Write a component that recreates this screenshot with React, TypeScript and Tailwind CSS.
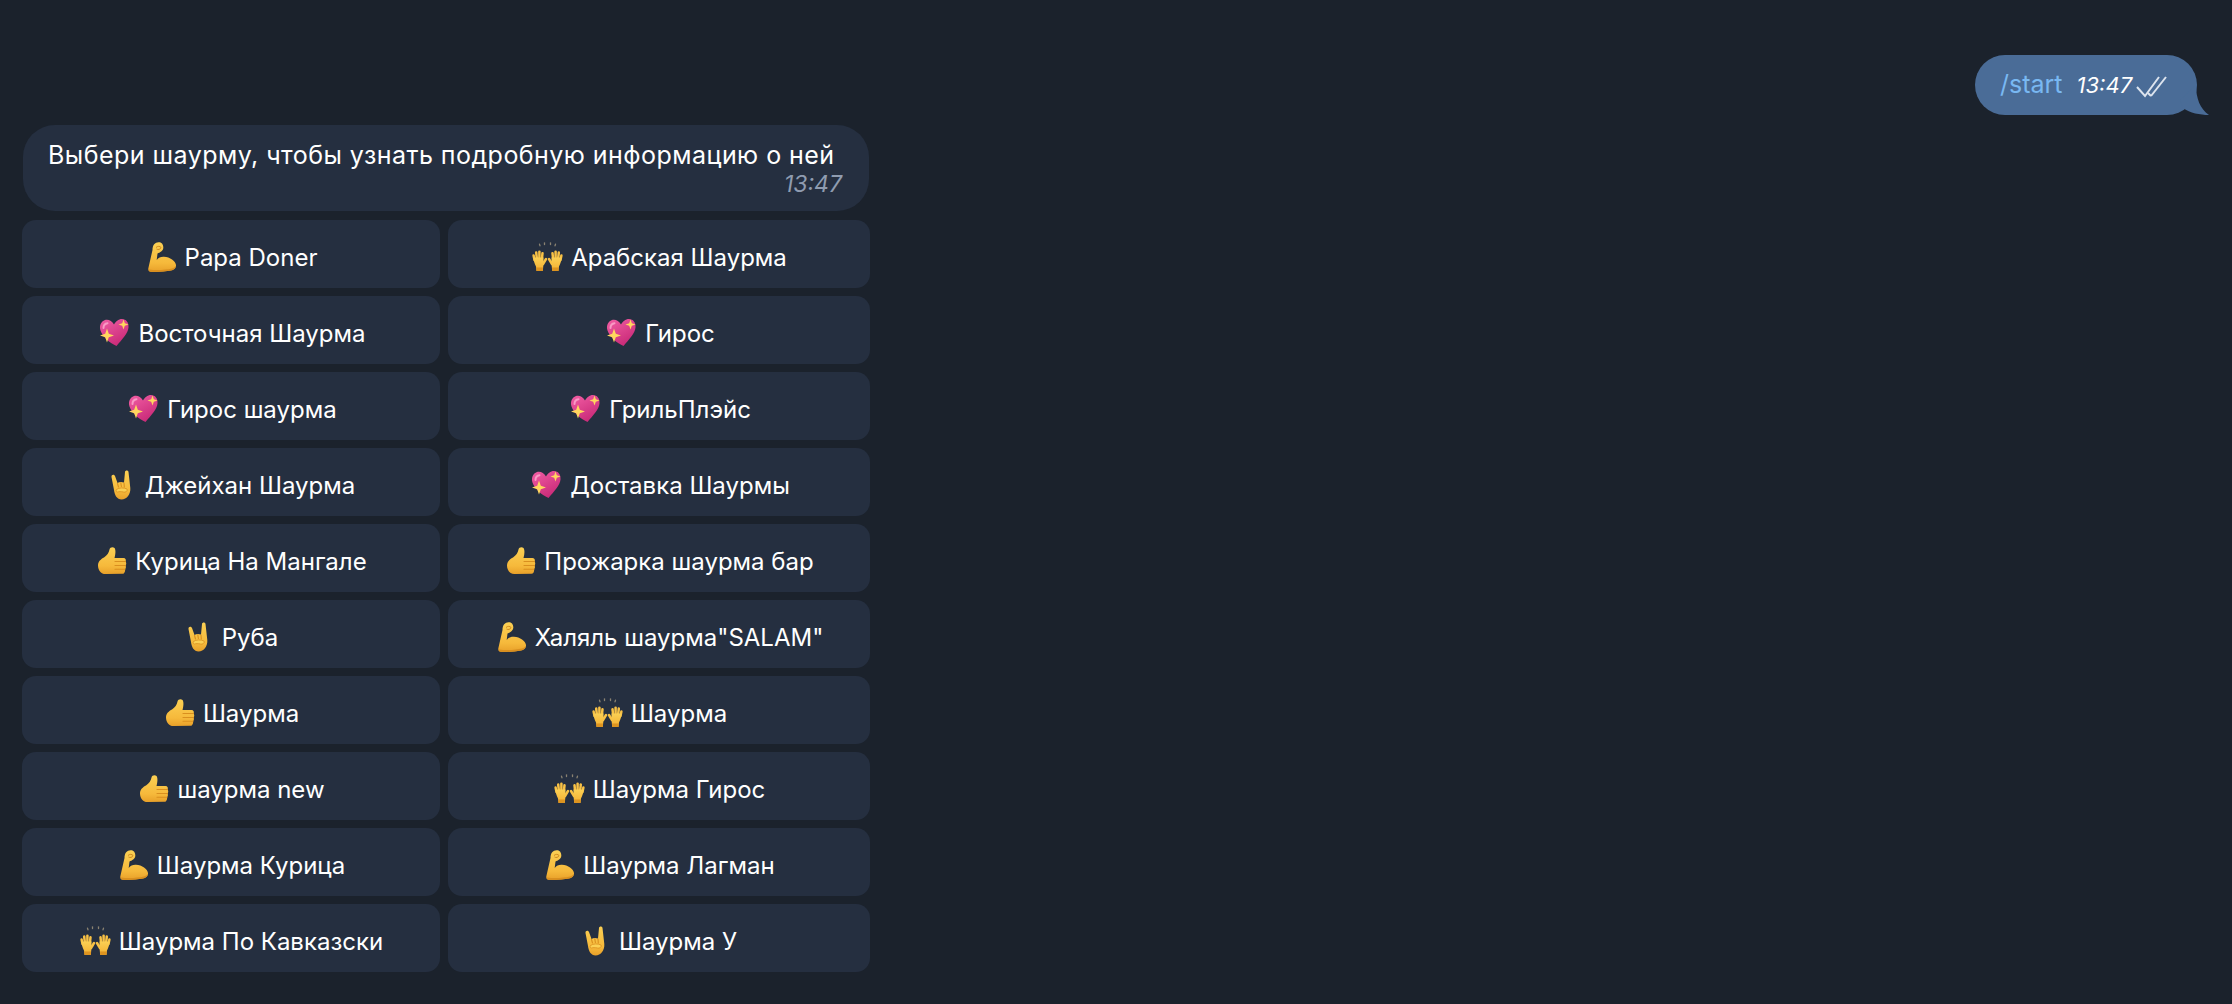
import React from "react";

const font = { fontFamily: "Inter, 'Noto Sans', sans-serif" };

function Defs() {
  return (
    <svg width="0" height="0" className="absolute">
      <defs>
        <linearGradient id="skin" x1="0" y1="0" x2="0" y2="1">
          <stop offset="0" stopColor="#fbd054" />
          <stop offset="0.7" stopColor="#f6b93b" />
          <stop offset="1" stopColor="#e8a029" />
        </linearGradient>
        <linearGradient id="pink" x1="0" y1="0" x2="0.6" y2="1">
          <stop offset="0" stopColor="#f25fa5" />
          <stop offset="1" stopColor="#c92a78" />
        </linearGradient>
      </defs>
    </svg>
  );
}

function Muscle() {
  return (
    <svg width="28" height="30" viewBox="0 0 28 30" className="shrink-0 -mt-[2px] ml-[3px] mr-[1px]">
      <path d="M4.500 8C4.500 3 7 .5 10.500 .3 14 0 15.500 3 15.300 6 15 9 12 10.500 9.500 11.500L8.700 18C10.500 15.500 13 14.500 16 14.700 22 15 27.500 19 28 23 28.300 26 26 28 23 28.600 16 30 7 30.200 2.500 29.700 .5 29.500 0 28 .4 26Z" fill="url(#skin)" />
      <path d="M1 27.500C8 28.500 18 28 24 26.500 25.800 26 27 25 27.800 24 27.300 26.500 25.500 28 23 28.600 16 30 7 30.200 2.500 29.700 1.500 29.500 1 28.500 1 27.500Z" fill="#d98f1f" />
      <path d="M8 5.500C9.500 4 12 4 13 5.500 12.500 7.500 10 8 8.500 7" fill="none" stroke="#cf8a1f" strokeWidth="1" />
    </svg>
  );
}

function Raised() {
  const hand = (
    <>
      <g strokeWidth="2.500" strokeLinecap="round">
        <path d="M2.500 18L1.600 13.500" stroke="#f8c145" />
        <path d="M4.800 16L4.200 10.500" stroke="#f8c145" />
        <path d="M7.400 16V9.800" stroke="#f8c145" />
        <path d="M10 16L10.500 11.200" stroke="#f8c145" />
        <path d="M11 22L14 17" stroke="#f8c145" />
      </g>
      <path d="M1.500 15.500H11.500V22L10.800 29H4.500L4 24.500C2.500 21.500 1.500 18.500 1.500 15.500Z" fill="url(#skin)" />
      <path d="M4.300 25.500H10.900L10.800 29H4.500Z" fill="#dd9420" />
    </>
  );
  return (
    <svg width="31" height="30" viewBox="0 0 31 30" className="shrink-0 -mt-[2px] ml-[1px]">
      {hand}
      <g transform="translate(31 0) scale(-1 1)">{hand}</g>
      <g stroke="#8a8271" strokeWidth="1.300" strokeLinecap="round">
        <path d="M7.500 2.200L8 3.800" />
        <path d="M12.500 .8V2.500" />
        <path d="M18.500 .8V2.500" />
        <path d="M23.500 2.200L23 3.800" />
      </g>
    </svg>
  );
}

function Heart() {
  return (
    <svg width="34" height="30" viewBox="-3 0 34 30" className="shrink-0 -mt-[2px]">
      <path d="M15 6.500C13 2.500 9 1 6 2 2 3.500 0 7.500 1.500 12.500 3.500 18.500 10 24.500 17.500 28 23 21.500 29 15.500 29.500 9.500 30 4.500 27 1 23 1 19.500 1 16.500 3.500 15 6.500Z" fill="url(#pink)" />
      <path d="M4.500 10C4.500 7.500 6 5.500 8.500 5.200" stroke="#f99ac5" strokeWidth="2" fill="none" strokeLinecap="round" />
      <path d="M8 10.500L9.800 15.700 15 17.500 9.800 19.300 8 24.500 6.200 19.300 1 17.500 6.200 15.700Z" fill="#ffd75e" />
      <path d="M24.500 1.500L25.800 5.200 29.500 6.500 25.800 7.800 24.500 11.500 23.200 7.800 19.500 6.500 23.200 5.200Z" fill="#ffd75e" />
    </svg>
  );
}

function Horns() {
  return (
    <svg width="30" height="30" viewBox="-4 0 30 30" className="shrink-0 -mt-[2px]">
      <path d="M.5 7C.3 4.500 3 4 4 6L6.500 13C8 12 10 11.500 13 12.500L14 2C14.200 0 17.300 0 17.500 2L19.300 18C19.800 24 16 29.500 10.500 29.500 6 29.500 3.500 25 3 20Z" fill="url(#skin)" />
      <path d="M6.500 13.500L7.500 17M9.800 12.800L10.400 16.500M13 13L13.300 17" stroke="#d98f1f" strokeWidth="1.100" strokeLinecap="round" />
      <path d="M5.500 19.500C8 17.500 13 17.500 16 19 17 21 14.500 22.500 12.500 22 10 21.500 8 21.500 6.500 22 5 22 4.800 20.500 5.500 19.500Z" fill="#fbd054" stroke="#d98f1f" strokeWidth=".8" />
    </svg>
  );
}

function Thumb() {
  return (
    <svg width="32" height="30" viewBox="-3 0 32 30" className="shrink-0 -mt-[2px]">
      <path d="M0 19.500C0 15.500 3 13 6 11.500 9 9.500 11 6.500 11.500 3.500 12 1 15 .5 16.500 2 18 4 17.500 8.500 16.500 12L25.500 12C27.500 12 28.500 14 27.500 15.500 28.500 16.500 28.500 18.500 27.500 19.500 28.300 20.500 28 22.500 27 23.200 27.500 25 26.500 27.800 24.500 27.800L8 28C4 28.500 0 25 0 19.500Z" fill="url(#skin)" />
      <path d="M17 15.500H27.500M17 19.500H27.500M17 23.300H27" stroke="#d98f1f" strokeWidth="1.100" strokeLinecap="round" />
    </svg>
  );
}

const icons = { m: Muscle, r: Raised, h: Heart, n: Horns, t: Thumb };
type Key = keyof typeof icons;

const rows: [Key, string, Key, string][] = [
  ["m", "Papa Doner", "r", "Арабская Шаурма"],
  ["h", "Восточная Шаурма", "h", "Гирос"],
  ["h", "Гирос шаурма", "h", "ГрильПлэйс"],
  ["n", "Джейхан Шаурма", "h", "Доставка Шаурмы"],
  ["t", "Курица На Мангале", "t", "Прожарка шаурма бар"],
  ["n", "Руба", "m", 'Халяль шаурма"SALAM"'],
  ["t", "Шаурма", "r", "Шаурма"],
  ["t", "шаурма new", "r", "Шаурма Гирос"],
  ["m", "Шаурма Курица", "m", "Шаурма Лагман"],
  ["r", "Шаурма По Кавказски", "n", "Шаурма У"],
];

function Btn({ icon, text }: { icon: Key; text: string }) {
  const I = icons[icon];
  return (
    <div className="h-[68px] pt-[8px] rounded-[14px] bg-[#252f40] flex items-center justify-center gap-[8px] text-[24px] leading-none text-white">
      <I />
      <span>{text}</span>
    </div>
  );
}

export default function App() {
  return (
    <div className="w-[2232px] h-[1004px] overflow-hidden bg-[#1b222c] flex flex-col pt-[55px]" style={font}>
      <Defs />
      <div className="flex justify-end pr-[35px] h-[60px]">
        <div className="relative w-[222px] h-[60px] rounded-[30px] bg-[#4a6c97] flex items-center pl-[25px]">
          <span className="text-[25px] text-[#79b8f2]">/start</span>
          <span className="ml-[14px] text-[22px] italic text-white">13:47</span>
          <svg width="32" height="22" viewBox="0 0 32 22" className="ml-[4px] mt-[4px]" fill="none" stroke="#dde4ee" strokeWidth="2">
            <path d="M1 11l8 9L23 1" />
            <path d="M15 20L30 1" />
            <path d="M12 17l3 3" />
          </svg>
          <svg width="32" height="30" viewBox="0 0 32 30" className="absolute left-[205px] bottom-0">
            <path d="M16 0C16 13 20 24 29 30 20 30 10 28 3 23L0 15Z" fill="#4a6c97" />
          </svg>
        </div>
      </div>
      <div className="ml-[23px] mt-[10px] w-[846px] h-[86px] rounded-[32px] bg-[#252f40] pl-[25px] pr-[27px] pt-[15px] flex flex-col">
        <div className="text-[25px] leading-[31px] text-white tracking-[0.46px] whitespace-nowrap">Выбери шаурму, чтобы узнать подробную информацию о ней</div>
        <div className="text-right text-[23px] leading-[26px] italic text-[#8f9cb0]">13:47</div>
      </div>
      <div className="ml-[22px] mt-[9px] w-[848px] grid grid-cols-[418px_422px] gap-[8px]">
        {rows.map((r, i) => (
          <React.Fragment key={i}>
            <Btn icon={r[0]} text={r[1]} />
            <Btn icon={r[2]} text={r[3]} />
          </React.Fragment>
        ))}
      </div>
    </div>
  );
}
